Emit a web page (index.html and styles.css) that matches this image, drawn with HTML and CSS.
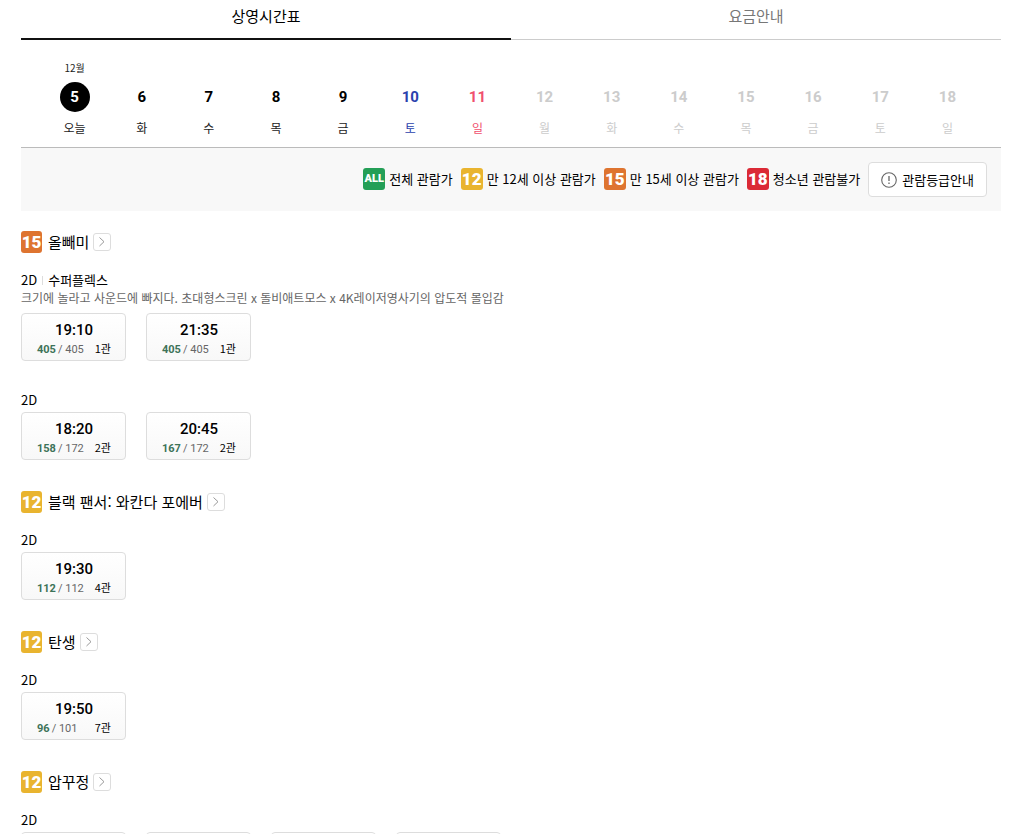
FILE: index.html
```html
<!DOCTYPE html>
<html lang="ko">
<head>
<meta charset="utf-8">
<title>상영시간표</title>
<link rel="stylesheet" href="styles.css">
</head>
<body>
<svg class="defs" aria-hidden="true">
  <symbol id="chevron" viewBox="0 0 16 16"><path d="M5.5 3.5 10 7.7l-4.5 4.3" fill="none" stroke="#999" stroke-width="1"/></symbol>
</svg>
<main class="page">
  <nav class="tabs">
    <a class="tab active" href="#time">상영시간표</a>
    <a class="tab" href="#price">요금안내</a>
  </nav>

  <section class="dates" id="time">
    <button class="date today"><span class="month">12월</span><b>5</b><span>오늘</span></button>
    <button class="date"><span class="month"></span><b>6</b><span>화</span></button>
    <button class="date"><span class="month"></span><b>7</b><span>수</span></button>
    <button class="date"><span class="month"></span><b>8</b><span>목</span></button>
    <button class="date"><span class="month"></span><b>9</b><span>금</span></button>
    <button class="date sat"><span class="month"></span><b>10</b><span>토</span></button>
    <button class="date sun"><span class="month"></span><b>11</b><span>일</span></button>
    <button class="date off" disabled><span class="month"></span><b>12</b><span>월</span></button>
    <button class="date off" disabled><span class="month"></span><b>13</b><span>화</span></button>
    <button class="date off" disabled><span class="month"></span><b>14</b><span>수</span></button>
    <button class="date off" disabled><span class="month"></span><b>15</b><span>목</span></button>
    <button class="date off" disabled><span class="month"></span><b>16</b><span>금</span></button>
    <button class="date off" disabled><span class="month"></span><b>17</b><span>토</span></button>
    <button class="date off" disabled><span class="month"></span><b>18</b><span>일</span></button>
  </section>

  <section class="legend">
    <span class="legend-item"><span class="badge all">ALL</span>전체 관람가</span>
    <span class="legend-item"><span class="badge r12">12</span>만 12세 이상 관람가</span>
    <span class="legend-item"><span class="badge r15">15</span>만 15세 이상 관람가</span>
    <span class="legend-item"><span class="badge r18">18</span>청소년 관람불가</span>
    <button class="guide">
      <svg width="16" height="16" viewBox="0 0 16 16" aria-hidden="true"><circle cx="8" cy="8" r="7.3" fill="none" stroke="#666" stroke-width="1.1"/><path d="M8 4v5M8 10.5v1.5" stroke="#666" stroke-width="1.3"/></svg>
      관람등급안내
    </button>
  </section>

  <article class="movie">
    <h2 class="title"><span class="badge r15">15</span>올빼미<a class="more" href="#m1" aria-label="올빼미"><svg width="16" height="16"><use href="#chevron"/></svg></a></h2>
    <div class="group">
      <p class="format">2D<span class="hall-type">수퍼플렉스</span></p>
      <p class="desc">크기에 놀라고 사운드에 빠지다. 초대형스크린 x 돌비애트모스 x 4K레이저영사기의 압도적 몰입감</p>
      <div class="times">
        <button class="time"><strong>19:10</strong><span class="info"><span class="seats"><b>405</b>/ 405</span><span>1관</span></span></button>
        <button class="time"><strong>21:35</strong><span class="info"><span class="seats"><b>405</b>/ 405</span><span>1관</span></span></button>
      </div>
    </div>
    <div class="group">
      <p class="format">2D</p>
      <div class="times">
        <button class="time"><strong>18:20</strong><span class="info"><span class="seats"><b>158</b>/ 172</span><span>2관</span></span></button>
        <button class="time"><strong>20:45</strong><span class="info"><span class="seats"><b>167</b>/ 172</span><span>2관</span></span></button>
      </div>
    </div>
  </article>

  <article class="movie">
    <h2 class="title"><span class="badge r12">12</span>블랙 팬서: 와칸다 포에버<a class="more" href="#m2" aria-label="블랙 팬서: 와칸다 포에버"><svg width="16" height="16"><use href="#chevron"/></svg></a></h2>
    <div class="group">
      <p class="format">2D</p>
      <div class="times">
        <button class="time"><strong>19:30</strong><span class="info"><span class="seats"><b>112</b>/ 112</span><span>4관</span></span></button>
      </div>
    </div>
  </article>

  <article class="movie">
    <h2 class="title"><span class="badge r12">12</span>탄생<a class="more" href="#m3" aria-label="탄생"><svg width="16" height="16"><use href="#chevron"/></svg></a></h2>
    <div class="group">
      <p class="format">2D</p>
      <div class="times">
        <button class="time"><strong>19:50</strong><span class="info"><span class="seats"><b>96</b>/ 101</span><span>7관</span></span></button>
      </div>
    </div>
  </article>

  <article class="movie">
    <h2 class="title"><span class="badge r12">12</span>압꾸정<a class="more" href="#m4" aria-label="압꾸정"><svg width="16" height="16"><use href="#chevron"/></svg></a></h2>
    <div class="group">
      <p class="format">2D</p>
      <div class="times">
        <button class="time"></button>
        <button class="time"></button>
        <button class="time"></button>
        <button class="time"></button>
      </div>
    </div>
  </article>
</main>
</body>
</html>
```

FILE: styles.css
```css
* { box-sizing: border-box; margin: 0; padding: 0; }
body {
  height: 100vh;
  overflow: hidden;
  background: #fff;
  color: #000;
  font: 13px/20px "Noto Sans CJK KR", sans-serif;
}
button { font: inherit; color: inherit; background: none; border: 0; cursor: pointer; }
a { color: inherit; text-decoration: none; }
.defs { display: none; }
.page { margin: 0 18px 0 21px; }

.tabs { display: flex; height: 40px; }
.tab {
  flex: 1;
  padding-top: 4px;
  border-bottom: 1px solid #ccc;
  color: #777;
  font-size: 15px;
  line-height: 24px;
  text-align: center;
}
.tab.active { border-bottom: 2px solid #111; color: #000; }

.dates {
  display: flex;
  padding: 18px 20px 8px;
  border-bottom: 1px solid #bbb;
}
.date {
  flex: 1;
  display: flex;
  flex-direction: column;
  align-items: center;
  color: #222;
  font-size: 12px;
  line-height: 22px;
}
.month { height: 24px; font-size: 10px; line-height: 20px; }
.date b {
  width: 30px;
  height: 30px;
  margin-bottom: 5px;
  border-radius: 50%;
  color: #000;
  font: 700 15px/30px Roboto, sans-serif;
}
.date.today b { background: #000; color: #fff; }
.date.sat, .date.sat b { color: #2a42ad; }
.date.sun, .date.sun b { color: #f0506e; }
.date.off, .date.off b { color: #ccc; }

.legend {
  display: flex;
  justify-content: flex-end;
  align-items: flex-start;
  gap: 8px;
  padding: 14px;
  background: #f8f8f8;
}
.legend-item { display: flex; align-items: center; gap: 4px; height: 34px; }
.badge {
  width: 22px;
  height: 22px;
  border-radius: 3px;
  color: #fff;
  font: 900 17px/22px Roboto, sans-serif;
  text-align: center;
}
.badge.all { background: #249f57; font-size: 11px; }
.r12 { background: #e9b42f; }
.r15 { background: #de7430; }
.r18 { background: #db2a36; }
.guide {
  display: flex;
  align-items: center;
  gap: 5px;
  height: 35px;
  padding: 0 12px;
  border: 1px solid #ddd;
  border-radius: 4px;
  background: #fff;
}

.movie { padding-top: 20px; margin-bottom: 11px; }
.title {
  display: flex;
  align-items: center;
  height: 22px;
  margin-bottom: 17px;
  font-size: 15px;
  font-weight: 400;
}
.title .badge { width: 21px; margin-right: 6px; }
.more {
  display: flex;
  width: 18px;
  height: 18px;
  margin-left: 4px;
  border: 1px solid #ddd;
  border-radius: 3px;
}
.group + .group { margin-top: 29px; }
.format { display: flex; align-items: center; height: 20px; }
.hall-type { display: flex; align-items: center; }
.hall-type::before { content: ""; width: 1px; height: 9px; margin: 0 5px; background: #ddd; }
.desc { margin-bottom: 5px; color: #666; font-size: 12px; line-height: 16px; }
.times { display: flex; gap: 20px; padding-top: 2px; }
.time {
  width: 105px;
  height: 48px;
  padding: 6px 14px 0 15px;
  border: 1px solid #ddd;
  border-radius: 4px;
  background: linear-gradient(#fff, #f8f8f8);
}
.time strong { display: block; font: 500 15px/20px Roboto, sans-serif; }
.info {
  display: flex;
  justify-content: space-between;
  align-items: flex-start;
  font-size: 11px;
  line-height: 16px;
}
.seats { color: #666; font-family: Roboto, sans-serif; line-height: 20px; }
.seats b { margin-right: 2px; color: #3d7358; }
```
